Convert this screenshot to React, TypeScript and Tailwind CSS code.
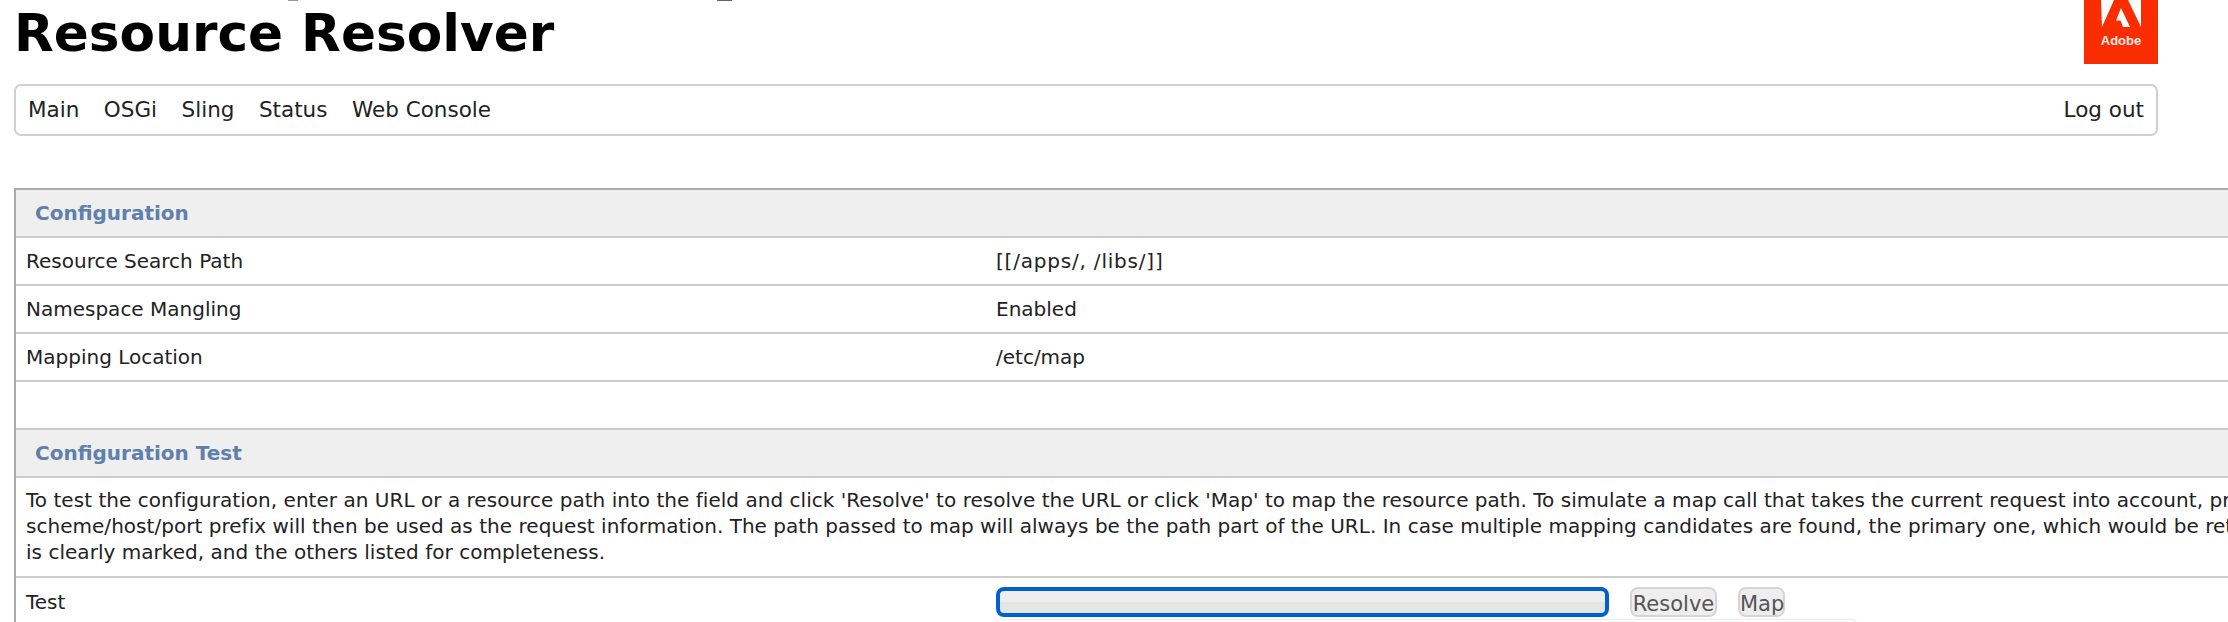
function SectionHeader({ title }: { title: string }) {
  return (
    <div className="h-[48px] bg-[#efefef] border-b-[2px] border-[#cccccc] flex items-center pl-[19px] pb-[1px]">
      <span className="text-[20px] font-bold text-[#5e80ab]">{title}</span>
    </div>
  );
}

function Row({ label, value, wide }: { label: string; value?: string; wide?: boolean }) {
  return (
    <div className="h-[48px] border-b-[2px] border-[#cccccc] flex items-center">
      <div className="w-[980px] pl-[10px] text-[20px] text-[#222]">{label}</div>
      {value && (
        <div className={wide ? "text-[20px] text-[#222] tracking-[0.8px]" : "text-[20px] text-[#222]"}>{value}</div>
      )}
    </div>
  );
}

export default function App() {
  return (
    <div className="w-[2228px] h-[622px] overflow-hidden bg-white font-['DejaVu_Sans',sans-serif] relative">
      {/* clipped descenders of the line scrolled off above the title */}
      <div className="absolute left-[288px] top-0 w-[10px] h-[1px] bg-[#999]" />
      <div className="absolute left-[717px] top-0 w-[15px] h-[1px] bg-[#666]" />

      {/* Header */}
      <div className="h-[84px] pl-[14px] pr-[70px] flex justify-between items-start">
        <h1 className="text-[51.7px] leading-[60px] font-bold text-black mt-[3px] whitespace-nowrap">Resource Resolver</h1>
        <div className="w-[74px] h-[64px] bg-[#fa2d00] flex flex-col items-center">
          <svg viewBox="0 0 40 27" className="w-[40px] h-[27px]" fill="#fff">
            <path d="M0 0h13L1 27z" />
            <path d="M27 0h13v27z" />
            <path d="M20 8l9 19h-7l-2.5-6.5H15z" />
          </svg>
          <span className="text-[13px] leading-[14px] font-bold text-white/90 font-['Liberation_Sans',sans-serif] mt-[7px]">Adobe</span>
        </div>
      </div>

      {/* Nav bar */}
      <div className="ml-[14px] w-[2144px] h-[52px] border-[2px] border-[#d0d0d0] rounded-[7px] flex items-center justify-between pl-[12px] pr-[12px] pt-[1px] text-[21.5px] text-[#222]">
        <div className="flex gap-[24.5px]">
          <span>Main</span>
          <span>OSGi</span>
          <span>Sling</span>
          <span>Status</span>
          <span>Web Console</span>
        </div>
        <span>Log out</span>
      </div>

      {/* Tables */}
      <div className="ml-[14px] mt-[52px] w-[2300px] border-l-[2px] border-t-[2px] border-[#aaaaaa]">
        <SectionHeader title="Configuration" />
        <Row label="Resource Search Path" value="[[/apps/, /libs/]]" wide />
        <Row label="Namespace Mangling" value="Enabled" />
        <Row label="Mapping Location" value="/etc/map" />
        <div className="h-[48px] border-b-[2px] border-[#cccccc]" />
        <SectionHeader title="Configuration Test" />
        <div className="h-[100px] border-b-[2px] border-[#cccccc] pl-[10px] pt-[9px] text-[20px] leading-[26px] text-[#222] whitespace-nowrap tracking-[0.03px]">
          To test the configuration, enter an URL or a resource path into the field and click 'Resolve' to resolve the URL or click 'Map' to map the resource path. To simulate a map call that takes the current request into account, provide a full URL whose
          <br />
          scheme/host/port prefix will then be used as the request information. The path passed to map will always be the path part of the URL. In case multiple mapping candidates are found, the primary one, which would be returned by
          <br />
          is clearly marked, and the others listed for completeness.
        </div>
        <div className="h-[48px] flex items-center">
          <div className="w-[980px] pl-[10px] text-[20px] text-[#222]">Test</div>
          <div className="w-[613px] h-[30px] rounded-[8px] border-[4px] border-[#0060d0] bg-gradient-to-b from-[#eeeeee] from-50% to-[#e5e5e5] to-50%" />
          <button className="ml-[21px] w-[87px] h-[30px] pt-[4px] rounded-[8px] border-[2px] border-[#d5d5d5] bg-[#eeeeee] text-[21px] text-[#555] leading-none">Resolve</button>
          <button className="ml-[21px] w-[47px] h-[30px] pt-[4px] rounded-[8px] border-[2px] border-[#d5d5d5] bg-[#eeeeee] text-[21px] text-[#555] leading-none">Map</button>
        </div>
      </div>

      {/* Autocomplete popup peeking in under the input */}
      <div className="absolute left-[996px] top-[619px] w-[860px] h-[40px] bg-white border border-[#eeeeee] rounded-[4px] shadow-sm" />
    </div>
  );
}
